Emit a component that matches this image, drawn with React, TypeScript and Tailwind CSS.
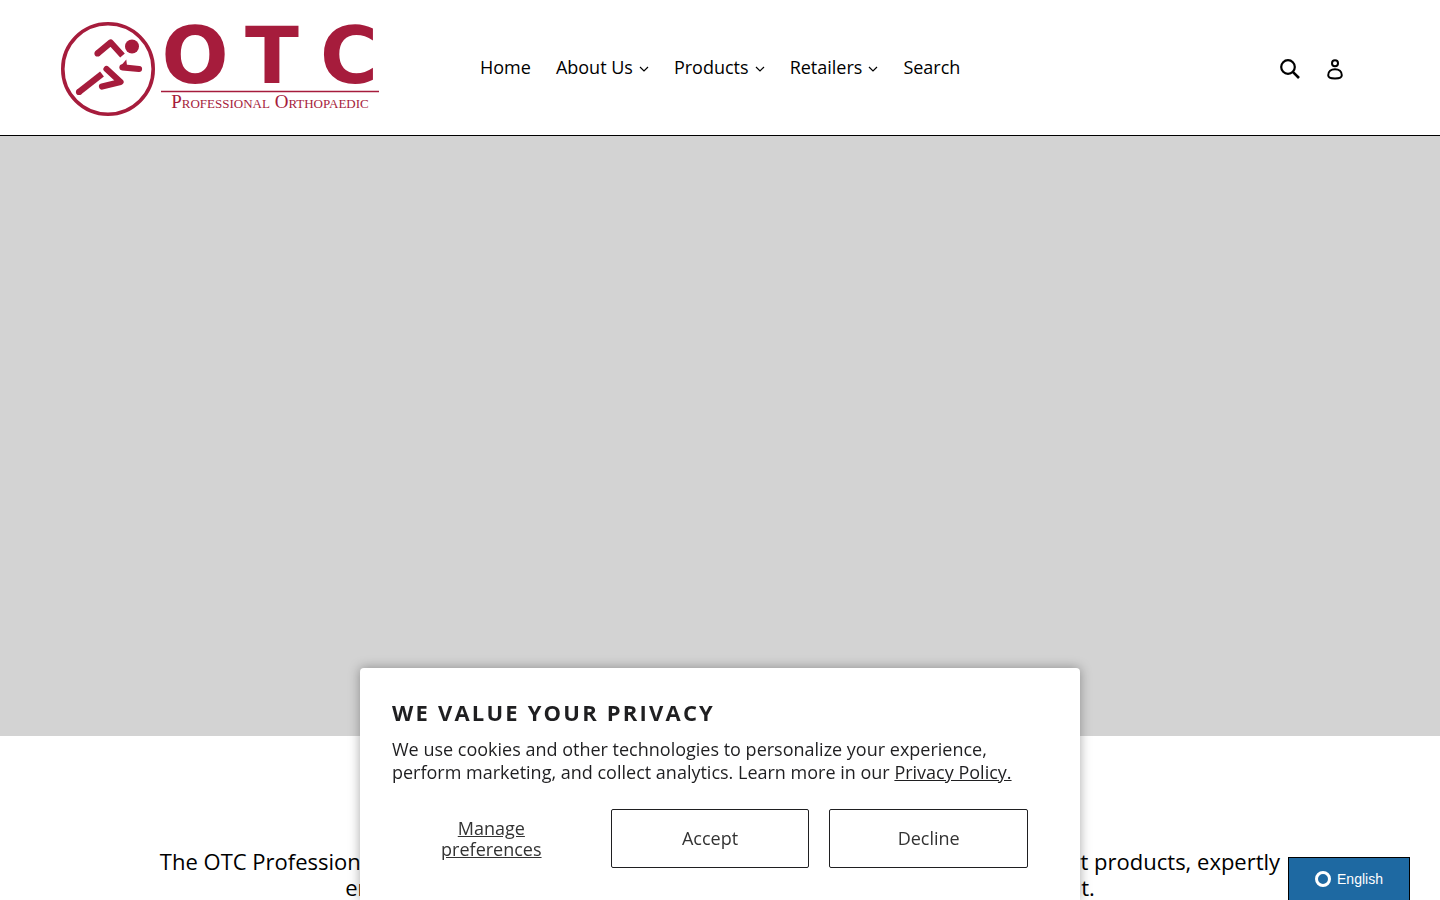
import React from 'react';

type NavItem = { label: string; hasMenu?: boolean };

const navItems: NavItem[] = [
    { label: 'Home' },
    { label: 'About Us', hasMenu: true },
    { label: 'Products', hasMenu: true },
    { label: 'Retailers', hasMenu: true },
    { label: 'Search' },
];

const Logo = () => (
    <svg viewBox="0 0 320 98" className="w-80 h-[98px] overflow-visible" role="img" aria-label="OTC Professional Orthopaedic">
        {/* Runner */}
        <circle cx="48" cy="49" r="45.2" fill="none" stroke="#a61c3c" strokeWidth="3.6" />
        <circle cx="72" cy="26.5" r="7" fill="#a61c3c" />
        <g fill="none" stroke="#a61c3c" strokeWidth="6.2" strokeLinejoin="round">
            <path d="M37.5 33.5 50.7 22.5 62.5 35.5" />
            <path d="M62.5 47.3 79 49" strokeLinecap="round" />
            <path d="M19 72 42 54" />
            <path d="M46.5 49 60.5 62 42 66.5" strokeLinecap="round" />
        </g>
        <circle cx="37.5" cy="33.5" r="3.1" fill="#a61c3c" />
        <circle cx="19" cy="72" r="3.1" fill="#a61c3c" />
        <path d="M66.3 39.5 59.3 47.5 67 46Z" fill="#a61c3c" />
        {/* Wordmark */}
        <g fill="#a61c3c" fontFamily="'DejaVu Sans', sans-serif" fontWeight="700" fontSize="79" textAnchor="middle">
            <text x="135" y="63">O</text>
            <text x="212" y="63">T</text>
            <text x="289" y="63">C</text>
        </g>
        <path d="M101 71.5H319" stroke="#a61c3c" strokeWidth="1.4" />
        <text x="210" y="88" fill="#a61c3c" fontFamily="'Liberation Serif', serif" fontSize="19" textAnchor="middle" style={{ fontVariant: 'small-caps' }}>
            Professional Orthopaedic
        </text>
    </svg>
);

const Chevron = () => (
    <svg viewBox="0 0 10 6" className="w-2.5 h-1.5 mt-1" fill="none" stroke="currentColor" strokeWidth="1.2" aria-hidden="true">
        <path d="M1 1 5 5 9 1" />
    </svg>
);

const Header = () => (
    <header className="flex items-center h-34 pt-0.5 pl-15 pr-[95px] bg-white border-b border-black">
        <a href="#home" className="shrink-0"><Logo /></a>
        <nav className="flex-1 ml-25 pb-1">
            <ul className="flex items-center gap-[25px] text-lg leading-6">
                {navItems.map((item) => (
                    <li key={item.label}>
                        {item.hasMenu ? (
                            <button type="button" className="flex items-center gap-1.5">
                                {item.label}
                                <Chevron />
                            </button>
                        ) : (
                            <a href={`#${item.label.toLowerCase()}`}>{item.label}</a>
                        )}
                    </li>
                ))}
            </ul>
        </nav>
        <div className="flex items-center gap-6">
            <button type="button" aria-label="Search">
                <svg viewBox="0 0 22 22" className="w-5.5 h-5.5" fill="none" stroke="currentColor" strokeWidth="2.2">
                    <circle cx="9" cy="9" r="6.8" />
                    <path d="M13.8 13.8 20 20" strokeWidth="2.6" />
                </svg>
            </button>
            <a href="#login" aria-label="Log in">
                <svg viewBox="0 0 20 22" className="w-5 h-5.5" fill="none" stroke="currentColor" strokeWidth="2">
                    <circle cx="10" cy="5.3" r="3" />
                    <path d="M3.2 17.2c0-3.6 2.8-6 6.8-6s6.8 2.4 6.8 6c0 2.4-2.9 3.2-6.8 3.2s-6.8-.8-6.8-3.2Z" />
                </svg>
            </a>
        </div>
    </header>
);

const CookieBanner = () => (
    <section
        role="dialog"
        aria-labelledby="privacy-title"
        className="fixed bottom-0 inset-x-0 mx-auto w-full max-w-[720px] pt-[30px] pb-8 pl-8 pr-13 bg-white rounded-t-sm text-[#1f1f21] shadow-[0_0_12px_rgba(0,0,0,0.35)]"
    >
        <h2 id="privacy-title" className="text-[22px] leading-7 font-bold uppercase tracking-widest">We value your privacy</h2>
        <p className="mt-3 text-lg leading-[23px]">
            We use cookies and other technologies to personalize your experience, perform marketing, and collect analytics. Learn more in our{' '}
            <a href="#privacy" className="underline">Privacy Policy.</a>
        </p>
        <div className="grid grid-cols-3 gap-5 mt-[25px] text-lg leading-[21px] text-[#333]">
            <button type="button" className="px-10 underline">Manage preferences</button>
            <button type="button" className="h-[59px] border border-[#1f1f21] rounded-xs">Accept</button>
            <button type="button" className="h-[59px] border border-[#1f1f21] rounded-xs">Decline</button>
        </div>
    </section>
);

export default function App() {
    return (
        <div className="min-h-screen bg-white text-black font-['Open_Sans',sans-serif]">
            <Header />
            <main>
                {/* Slideshow area */}
                <div className="h-[600px] bg-[#d3d3d3]" />
                <p className="pt-28 px-[55px] text-center text-[22px] leading-[26px]">
                    The OTC Professional Orthopaedic line offers a comprehensive mix of orthopaedic support products, expertly
                    <br />
                    engineered to boost comfort, stability and relief with the best possible fit.
                </p>
            </main>
            <CookieBanner />
            <button
                type="button"
                className="fixed bottom-0 right-[30px] w-[122px] h-[43px] flex items-center justify-center gap-1.5 bg-[#1e69a2] border border-b-0 border-black text-white text-sm font-['Liberation_Sans',sans-serif]"
            >
                <span className="w-4 h-4 rounded-full border-3 border-white" />
                English
            </button>
        </div>
    );
}
